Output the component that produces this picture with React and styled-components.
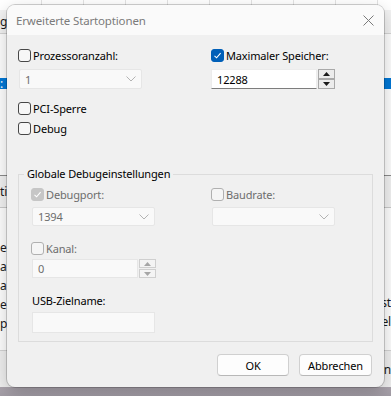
import React from "react";
import styled, { createGlobalStyle } from "styled-components";

const GlobalStyle = createGlobalStyle`
  html, body {
    margin: 0;
    padding: 0;
  }
  body {
    width: 391px;
    height: 396px;
    overflow: hidden;
    background: #ffffff;
    font-family: "Noto Sans", "Liberation Sans", sans-serif;
    font-size: 11px;
    letter-spacing: -0.15px;
    color: #000000;
  }
`;

const Screen = styled.div`
  position: relative;
  width: 391px;
  height: 396px;
  overflow: hidden;
  display: flex;
  flex-direction: column;
  background: #ffffff;
`;

/* ---------- background application (mostly hidden) ---------- */

const BgHeader = styled.div`
  height: 10px;
  display: flex;
  flex-shrink: 0;
`;

const BgHeaderCell = styled.div`
  width: 41px;
  flex-shrink: 0;
  border-right: 1px solid #e3e3e3;
`;

const BgRow = styled.div`
  height: ${(p) => p.h}px;
  flex-shrink: 0;
  display: flex;
  justify-content: space-between;
  align-items: ${(p) => p.align || "center"};
  background: ${(p) => p.bg || "#ffffff"};
  border-top: ${(p) => (p.top ? `1px solid ${p.top}` : "none")};
  border-bottom: ${(p) => (p.bottom ? `1px solid ${p.bottom}` : "none")};
  color: ${(p) => p.color || "#1a1a1a"};
  white-space: nowrap;
  font-size: 12px;
`;

const BgLines = styled.div`
  display: flex;
  flex-direction: column;
  align-items: ${(p) => (p.right ? "flex-end" : "flex-start")};
  padding-top: ${(p) => p.pt || 0}px;
  line-height: 19px;
`;

const Desktop = styled.div`
  flex: 1;
  background: linear-gradient(#aba4ad, #a29ca5);
`;

/* ---------- dialog ---------- */

const Dialog = styled.div`
  position: absolute;
  left: 7px;
  top: 5px;
  width: 377px;
  height: 382px;
  box-sizing: border-box;
  border-radius: 8px;
  background: #f0f0f0;
  box-shadow: 0 0 0 1px rgba(0, 0, 0, 0.18), 0 6px 18px rgba(0, 0, 0, 0.22);
  overflow: hidden;
  display: flex;
  flex-direction: column;
`;

const TitleBar = styled.div`
  height: 30px;
  flex-shrink: 0;
  background: #fafafa;
  display: flex;
  align-items: center;
  justify-content: space-between;
  padding: 0 10px 0 9px;
`;

const Title = styled.span`
  color: #7b7b7b;
  font-size: 11.5px;
`;

const Body = styled.div`
  flex: 1;
  display: flex;
  flex-direction: column;
  padding: 12px 11px 10px 11px;
`;

const TwoCols = styled.div`
  display: grid;
  grid-template-columns: ${(p) => p.left}px 1fr;
`;

const Col = styled.div`
  display: flex;
  flex-direction: column;
  align-items: flex-start;
`;

const CheckRow = styled.label`
  display: flex;
  align-items: center;
  height: 16px;
  margin-top: ${(p) => p.mt || 0}px;
  color: ${(p) => (p.disabled ? "#6d6d6d" : "#000000")};
  white-space: nowrap;
`;

const Box = styled.span`
  width: 13px;
  height: 13px;
  box-sizing: border-box;
  border-radius: 3px;
  margin-right: 2px;
  display: flex;
  align-items: center;
  justify-content: center;
  flex-shrink: 0;
  background: ${(p) =>
    p.checked ? (p.disabled ? "#c6c6c6" : "#005fb8") : p.disabled ? "#f5f5f5" : "#f7f7f7"};
  border: 1px solid
    ${(p) => (p.checked ? (p.disabled ? "#c6c6c6" : "#005fb8") : p.disabled ? "#b0b0b0" : "#474747")};
`;

const Label = styled.div`
  height: 16px;
  line-height: 16px;
  margin-top: ${(p) => p.mt || 0}px;
  margin-left: 1px;
  color: #000000;
`;

const Combo = styled.div`
  width: ${(p) => p.w || 123}px;
  height: ${(p) => p.h || 20}px;
  box-sizing: border-box;
  margin-top: ${(p) => p.mt || 0}px;
  margin-left: 1px;
  background: #f9f9f9;
  border: 1px solid #e6e6e6;
  border-radius: 2px;
  display: flex;
  align-items: center;
  justify-content: space-between;
  padding: 0 5px 0 5px;
  color: #6d6d6d;
`;

const SpinField = styled.div`
  display: flex;
  margin-top: ${(p) => p.mt || 0}px;
  margin-left: ${(p) => p.ml || 0}px;
`;

const SpinInput = styled.div`
  width: ${(p) => p.w}px;
  height: ${(p) => p.h}px;
  box-sizing: border-box;
  padding: 0 5px;
  display: flex;
  align-items: center;
  background: ${(p) => (p.disabled ? "#f9f9f9" : "#ffffff")};
  border: 1px solid ${(p) => (p.disabled ? "#e6e6e6" : "#ececec")};
  border-bottom-color: ${(p) => (p.disabled ? "#e6e6e6" : "#7d7d7d")};
  color: ${(p) => (p.disabled ? "#6d6d6d" : "#000000")};
`;

const SpinButtons = styled.div`
  display: flex;
  flex-direction: column;
  justify-content: space-between;
  width: 18px;
  padding: 0 0 0 1px;
  box-sizing: border-box;
`;

const SpinBtn = styled.div`
  height: ${(p) => p.h}px;
  box-sizing: border-box;
  border: 1px solid ${(p) => (p.disabled ? "#cfcfcf" : "#a9a9a9")};
  background: ${(p) => (p.disabled ? "#f4f4f4" : "#ececec")};
  display: flex;
  align-items: center;
  justify-content: center;
`;

const TextBox = styled.div`
  width: 123px;
  height: 21px;
  box-sizing: border-box;
  margin-top: ${(p) => p.mt || 0}px;
  margin-left: 1px;
  background: #f9f9f9;
  border: 1px solid #e6e6e6;
`;

const Group = styled.fieldset`
  margin: 30px 0 0 0;
  border: 1px solid #dcdcdc;
  padding: 4px 12px 8px 12px;
  min-width: 0;
`;

const Legend = styled.legend`
  padding: 0 3px;
  margin-left: -7px;
  line-height: 16px;
  color: #000000;
`;

const Buttons = styled.div`
  display: flex;
  justify-content: flex-end;
  gap: 10px;
  margin-top: 12px;
  padding-right: 1px;
`;

const Button = styled.button`
  width: ${(p) => p.w}px;
  height: 22px;
  box-sizing: border-box;
  border: 1px solid #d0d0d0;
  border-bottom-color: #b8b8b8;
  border-radius: 4px;
  background: #fdfdfd;
  font-family: inherit;
  font-size: inherit;
  letter-spacing: inherit;
  color: #000000;
  padding: 0;
`;

const Check = ({ checked, disabled }) => (
  <Box checked={checked} disabled={disabled}>
    {checked && (
      <svg width="9" height="9" viewBox="0 0 9 9">
        <polyline points="1.5,4.8 3.6,6.8 7.6,2.2" fill="none" stroke="#fff" strokeWidth="1.1" />
      </svg>
    )}
  </Box>
);

const Chevron = () => (
  <svg width="10" height="6" viewBox="0 0 10 6">
    <polyline points="0.5,0.5 5,5 9.5,0.5" fill="none" stroke="#b3b3b3" strokeWidth="1" />
  </svg>
);

const Tri = ({ up, disabled }) => (
  <svg width="7" height="4" viewBox="0 0 7 4">
    <polygon
      points={up ? "3.5,0 7,4 0,4" : "0,0 7,0 3.5,4"}
      fill={disabled ? "#a6a6a6" : "#1a1a1a"}
    />
  </svg>
);

const Spinner = ({ w, h, value, disabled, ml, mt }) => (
  <SpinField ml={ml} mt={mt}>
    <SpinInput w={w} h={h} disabled={disabled}>
      {value}
    </SpinInput>
    <SpinButtons>
      <SpinBtn h={Math.floor(h / 2)} disabled={disabled}>
        <Tri up disabled={disabled} />
      </SpinBtn>
      <SpinBtn h={Math.floor(h / 2)} disabled={disabled}>
        <Tri disabled={disabled} />
      </SpinBtn>
    </SpinButtons>
  </SpinField>
);

const Background = () => (
  <>
    <BgHeader>
      {Array.from({ length: 10 }).map((_, i) => (
        <BgHeaderCell key={i} />
      ))}
    </BgHeader>
    <BgRow h={23} bg="#f3f3f3" bottom="#d6d6d6">
      <span>g</span>
    </BgRow>
    <BgRow h={44} />
    <BgRow h={11} bg="#0078d7" color="#ffffff">
      <span>:</span>
    </BgRow>
    <BgRow h={86} />
    <BgRow h={31} bg="#f3f3f3" top="#8c8c8c" bottom="#cbcbcb">
      <span>ti</span>
    </BgRow>
    <BgRow h={142} align="flex-start">
      <BgLines pt={30}>
        <span>er</span>
        <span>al</span>
        <span>a</span>
        <span>e [</span>
        <span>pe</span>
      </BgLines>
      <BgLines right pt={85}>
        <span>st</span>
        <span>el</span>
      </BgLines>
    </BgRow>
    <BgRow h={36} bg="#f0f0f0" top="#d4d4d4">
      <span />
      <span>en</span>
    </BgRow>
    <Desktop />
  </>
);

export default function App() {
  return (
    <Screen>
      <GlobalStyle />
      <Background />
      <Dialog>
        <TitleBar>
          <Title>Erweiterte Startoptionen</Title>
          <svg width="11" height="11" viewBox="0 0 11 11">
            <path d="M0.5 0.5 L10.5 10.5 M10.5 0.5 L0.5 10.5" stroke="#7a7a7a" strokeWidth="1" />
          </svg>
        </TitleBar>
        <Body>
          <TwoCols left={193}>
            <Col>
              <CheckRow>
                <Check />
                Prozessoranzahl:
              </CheckRow>
              <Combo mt={6}>
                <span>1</span>
                <Chevron />
              </Combo>
              <CheckRow mt={11}>
                <Check />
                PCI-Sperre
              </CheckRow>
              <CheckRow mt={4}>
                <Check />
                Debug
              </CheckRow>
            </Col>
            <Col>
              <CheckRow>
                <Check checked />
                Maximaler Speicher:
              </CheckRow>
              <Spinner mt={6} w={106} h={20} value="12288" />
            </Col>
          </TwoCols>

          <Group>
            <Legend>Globale Debugeinstellungen</Legend>
            <TwoCols left={180}>
              <Col>
                <CheckRow disabled>
                  <Check checked disabled />
                  Debugport:
                </CheckRow>
                <Combo mt={5} h={19}>
                  <span>1394</span>
                  <Chevron />
                </Combo>
                <CheckRow disabled mt={14}>
                  <Check disabled />
                  Kanal:
                </CheckRow>
                <Spinner mt={3} ml={1} w={106} h={19} value="0" disabled />
                <Label mt={15}>USB-Zielname:</Label>
                <TextBox mt={3} />
              </Col>
              <Col>
                <CheckRow disabled>
                  <Check disabled />
                  Baudrate:
                </CheckRow>
                <Combo mt={5} h={19}>
                  <span />
                  <Chevron />
                </Combo>
              </Col>
            </TwoCols>
          </Group>

          <Buttons>
            <Button w={72}>OK</Button>
            <Button w={73}>Abbrechen</Button>
          </Buttons>
        </Body>
      </Dialog>
    </Screen>
  );
}
